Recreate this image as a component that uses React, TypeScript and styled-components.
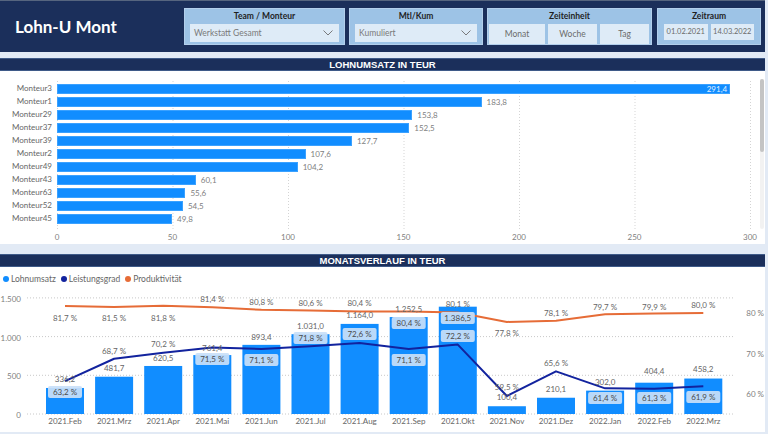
import React from 'react';
import styled, { createGlobalStyle } from 'styled-components';

const GlobalStyle = createGlobalStyle`
  html, body {
    margin: 0;
    padding: 0;
  }
  body {
    width: 768px;
    height: 434px;
    overflow: hidden;
    background: #e2eaf5;
    font-family: Lato, "Open Sans", sans-serif;
  }
`;

const NAVY = '#1b2f5b';
const BLUE = '#118dff';
const DARK = '#12239e';
const ORANGE = '#e66c37';

const Page = styled.div`
  width: 765px;
  height: 434px;
  display: flex;
  flex-direction: column;
`;

const Header = styled.header`
  height: 52px;
  box-sizing: border-box;
  background: ${NAVY};
  border-top: 1px solid #56657f;
  display: flex;
  align-items: flex-start;
  padding-top: 7px;
`;

const Title = styled.h1`
  margin: 0;
  width: 184px;
  box-sizing: border-box;
  padding-left: 15px;
  height: 37px;
  line-height: 37px;
  color: #fff;
  font-size: 17px;
  font-weight: 700;
  font-family: Lato, "Open Sans", sans-serif;
`;

const Filters = styled.div`
  display: flex;
  gap: 4px;
`;

const Panel = styled.div<{ $w: number; $ml?: number }>`
  width: ${(p) => p.$w}px;
  margin-left: ${(p) => p.$ml || 0}px;
  height: 37px;
  box-sizing: border-box;
  background: #9dc3e6;
  border: 1px solid #b3cfec;
  display: flex;
  flex-direction: column;
`;

const PanelTitle = styled.div`
  height: 14px;
  line-height: 14px;
  text-align: center;
  font-size: 8.5px;
  font-weight: 700;
  color: #1f1f1f;
`;

const Dropdown = styled.div`
  margin: 1px 5px 0;
  height: 18px;
  background: #deebf7;
  display: flex;
  align-items: center;
  justify-content: space-between;
  padding: 0 6px 0 4px;
  font-size: 8.5px;
  color: #7a7a7a;
`;

const ButtonRow = styled.div<{ $gap: number; $pad: number }>`
  display: flex;
  gap: ${(p) => p.$gap}px;
  padding: 1px ${(p) => p.$pad}px 0;
`;

const Toggle = styled.div<{ $w: number }>`
  width: ${(p) => p.$w}px;
  height: 20px;
  line-height: 20px;
  background: #deebf7;
  text-align: center;
  font-size: 8.5px;
  color: #6b6b6b;
`;

const DateBox = styled.div`
  width: 46px;
  height: 16px;
  line-height: 16px;
  background: #deebf7;
  text-align: center;
  font-size: 7.5px;
  color: #6b6b6b;
`;

const Spacer = styled.div<{ $h: number }>`
  height: ${(p) => p.$h}px;
  flex-shrink: 0;
`;

const SectionTitle = styled.div`
  height: 13px;
  box-sizing: border-box;
  background: ${NAVY};
  border-top: 1px solid #3f5a88;
  border-bottom: 1px solid #3f5a88;
  color: #fff;
  text-align: center;
  line-height: 11px;
  font-size: 9.5px;
  font-weight: 700;
  font-family: "Liberation Sans", Arial, sans-serif;
`;

/* Lohnumsatz je Monteur */

const BarBody = styled.div`
  height: 173px;
  background: #fff;
  box-sizing: border-box;
  padding-top: 8px;
  display: grid;
  grid-template-columns: 57px 694px 1fr;
  grid-template-rows: 151px 14px;
`;

const NameCol = styled.div`
  padding-top: 3px;
  display: flex;
  flex-direction: column;
`;

const Name = styled.div`
  height: 13px;
  line-height: 13px;
  text-align: right;
  padding-right: 5px;
  font-size: 8px;
  color: #666;
  white-space: nowrap;
`;

const Plot = styled.div`
  padding-top: 3px;
  display: flex;
  flex-direction: column;
  background-image: linear-gradient(to bottom, #fff 2px, transparent 2px),
    linear-gradient(to right, #d4d4d4 1px, transparent 1px);
  background-size: 100% 3px, 115.5px 100%;
`;

const Row = styled.div`
  height: 13px;
  display: flex;
  align-items: center;
`;

const Bar = styled.div`
  height: 10px;
  background: ${BLUE};
  box-shadow: inset 0 0 0 1px #3aa1ff;
  display: flex;
  align-items: center;
  justify-content: flex-end;
  font-size: 8px;
  color: #e4efff;
  padding-right: 3px;
  box-sizing: border-box;
`;

const BarValue = styled.span`
  margin-left: 5px;
  font-size: 8px;
  color: #808080;
`;

const ScrollCol = styled.div`
  display: flex;
  justify-content: flex-end;
  padding-right: 1px;
`;

const Track = styled.div`
  width: 4px;
  height: 150px;
  border-radius: 2px;
  background: #f2f2f2;
  display: flex;
  flex-direction: column;
`;

const Thumb = styled.div`
  height: 73px;
  border-radius: 2px;
  background: #c4c4c4;
`;

const Axis = styled.div`
  grid-column: 2;
  width: 693px;
  display: flex;
  justify-content: space-between;
`;

const Tick = styled.div`
  width: 0;
  display: flex;
  justify-content: center;
  font-size: 8px;
  line-height: 14px;
  color: #808080;
`;

/* Monatsverlauf */

const ComboBody = styled.div`
  height: 165px;
  background: #fff;
  display: flex;
  flex-direction: column;
`;

const Legend = styled.div`
  height: 12px;
  margin-top: 6px;
  display: flex;
  align-items: center;
  gap: 5px;
  padding-left: 3px;
  font-size: 8.5px;
  color: #666;
`;

const LegendItem = styled.span`
  display: flex;
  align-items: center;
  gap: 2px;
`;

const Dot = styled.span<{ $c: string }>`
  width: 6px;
  height: 6px;
  border-radius: 50%;
  background: ${(p) => p.$c};
`;

const ChartSvg = styled.svg`
  display: block;
  font-family: Lato, "Open Sans", sans-serif;
  font-size: 8px;
`;

const fmt = (v: number) => {
  const [i, d] = v.toFixed(1).split('.');
  return i.replace(/\B(?=(\d{3})+(?!\d))/g, '.') + ',' + d;
};

const monteure: [string, number][] = [
  ['Monteur3', 291.4],
  ['Monteur1', 183.8],
  ['Monteur29', 153.8],
  ['Monteur37', 152.5],
  ['Monteur39', 127.7],
  ['Monteur2', 107.6],
  ['Monteur49', 104.2],
  ['Monteur43', 60.1],
  ['Monteur63', 55.6],
  ['Monteur52', 54.5],
  ['Monteur45', 49.8],
];

const months = [
  '2021.Feb', '2021.Mrz', '2021.Apr', '2021.Mai', '2021.Jun', '2021.Jul', '2021.Aug',
  '2021.Sep', '2021.Okt', '2021.Nov', '2021.Dez', '2022.Jan', '2022.Feb', '2022.Mrz',
];
const umsatz = [336.2, 481.7, 620.5, 761.4, 893.4, 1031.0, 1164.0, 1252.5, 1386.5, 100.4, 210.1, 302.0, 404.4, 458.2];
const umsatzY = [379, 368, 358, 348, 337, 326, 315, 309, 318, 397, 389, 382, 371, 369];
const leist = [63.2, 68.7, 70.2, 71.5, 71.1, 71.8, 72.6, 71.1, 72.2, 59.5, 65.6, 61.4, 61.3, 61.9];
const leistY = [392, 351, 344, 359, 360, 338, 334, 360, 336, 387, 363, 398, 398, 397];
const leistBox = [1, 0, 0, 1, 1, 1, 1, 1, 1, 0, 0, 1, 1, 1];
const prod = [81.7, 81.5, 81.8, 81.4, 80.8, 80.6, 80.4, 80.4, 80.1, 77.8, 78.1, 79.7, 79.9, 80.0];
const prodY = [318, 318, 318, 299, 302, 303, 303, 323, 304, 333, 313, 307, 307, 305];

const TOP = 285;
const X = (i: number) => 65 + i * 49.1;
const yV = (v: number) => 414 - v * 0.0774 - TOP;
const yP = (p: number) => 353.5 - (p - 70) * 4.05 - TOP;

const Label: React.FC<{ x: number; y: number; text: string; box?: boolean }> = ({ x, y, text, box }) => (
  <g>
    {box && <rect x={x - 17} y={y - TOP - 6} width={34} height={12} rx={2} fill="#c9e0f9" fillOpacity={0.92} />}
    <text x={x} y={y - TOP} textAnchor="middle" dominantBaseline="central" fill={box ? '#4a4a4a' : '#666'}>
      {text}
    </text>
  </g>
);

const Chevron = () => (
  <svg width="10" height="6" viewBox="0 0 10 6">
    <polyline points="0.5,0.5 5,5 9.5,0.5" fill="none" stroke="#6d6d6d" strokeWidth="0.9" />
  </svg>
);

const ComboChart = () => {
  const leistPts = leist.map((p, i) => `${X(i)},${yP(p)}`).join(' ');
  const prodPts = prod.map((p, i) => `${X(i)},${yP(p)}`).join(' ');
  return (
    <ChartSvg width={765} height={147}>
      {[0, 500, 1000, 1500].map((v) => (
        <g key={v}>
          <line x1={27} x2={735} y1={yV(v)} y2={yV(v)} stroke="#c8c8c8" strokeDasharray="1 2" />
          <text x={21} y={yV(v) + 1} textAnchor="end" dominantBaseline="central" fill="#808080">
            {v === 0 ? '0' : v.toLocaleString('de-DE')}
          </text>
        </g>
      ))}
      {[80, 70, 60].map((p) => (
        <text key={p} x={764} y={yP(p)} textAnchor="end" dominantBaseline="central" fill="#808080">
          {p} %
        </text>
      ))}
      {umsatz.map((v, i) => (
        <rect key={i} x={X(i) - 19} y={yV(v)} width={38} height={yV(0) - yV(v)} fill={BLUE} />
      ))}
      {months.map((m, i) => (
        <text key={m} x={X(i)} y={136} textAnchor="middle" dominantBaseline="central" fill="#666">
          {m}
        </text>
      ))}
      <polyline points={prodPts} fill="none" stroke={ORANGE} strokeWidth={2} strokeLinejoin="round" />
      <polyline points={leistPts} fill="none" stroke={DARK} strokeWidth={2} strokeLinejoin="round" />
      {umsatz.map((v, i) => (
        <Label key={'u' + i} x={X(i)} y={umsatzY[i]} text={fmt(v)} box={i === 8} />
      ))}
      {prod.map((p, i) => (
        <Label key={'p' + i} x={X(i)} y={prodY[i]} text={fmt(p) + ' %'} box={i === 7} />
      ))}
      {leist.map((p, i) => (
        <Label key={'l' + i} x={X(i)} y={leistY[i]} text={fmt(p) + ' %'} box={leistBox[i] === 1} />
      ))}
    </ChartSvg>
  );
};

const App: React.FC = () => {
  return (
    <>
      <GlobalStyle />
      <Page>
        <Header>
          <Title>Lohn-U Mont</Title>
          <Filters>
            <Panel $w={161}>
              <PanelTitle>Team / Monteur</PanelTitle>
              <Dropdown>
                Werkstatt Gesamt
                <Chevron />
              </Dropdown>
            </Panel>
            <Panel $w={134}>
              <PanelTitle>Mtl/Kum</PanelTitle>
              <Dropdown>
                Kumuliert
                <Chevron />
              </Dropdown>
            </Panel>
            <Panel $w={165}>
              <PanelTitle>Zeiteinheit</PanelTitle>
              <ButtonRow $gap={3} $pad={1}>
                <Toggle $w={56}>Monat</Toggle>
                <Toggle $w={49}>Woche</Toggle>
                <Toggle $w={49}>Tag</Toggle>
              </ButtonRow>
            </Panel>
            <Panel $w={104} $ml={1}>
              <PanelTitle>Zeitraum</PanelTitle>
              <ButtonRow $gap={3} $pad={6}>
                <DateBox>01.02.2021</DateBox>
                <DateBox>14.03.2022</DateBox>
              </ButtonRow>
            </Panel>
          </Filters>
        </Header>
        <Spacer $h={6} />
        <SectionTitle>LOHNUMSATZ IN TEUR</SectionTitle>
        <BarBody>
          <NameCol>
            {monteure.map(([n]) => (
              <Name key={n}>{n}</Name>
            ))}
          </NameCol>
          <Plot>
            {monteure.map(([n, v], i) => (
              <Row key={n}>
                <Bar style={{ width: v * 2.31 }}>{i === 0 ? fmt(v) : null}</Bar>
                {i > 0 && <BarValue>{fmt(v)}</BarValue>}
              </Row>
            ))}
          </Plot>
          <ScrollCol>
            <Track>
              <Thumb />
            </Track>
          </ScrollCol>
          <Axis>
            {[0, 50, 100, 150, 200, 250, 300].map((t) => (
              <Tick key={t}>{t}</Tick>
            ))}
          </Axis>
        </BarBody>
        <Spacer $h={10} />
        <SectionTitle>MONATSVERLAUF IN TEUR</SectionTitle>
        <ComboBody>
          <Legend>
            <LegendItem>
              <Dot $c={BLUE} />
              Lohnumsatz
            </LegendItem>
            <LegendItem>
              <Dot $c={DARK} />
              Leistungsgrad
            </LegendItem>
            <LegendItem>
              <Dot $c={ORANGE} />
              Produktivität
            </LegendItem>
          </Legend>
          <ComboChart />
        </ComboBody>
      </Page>
    </>
  );
};

export default App;
